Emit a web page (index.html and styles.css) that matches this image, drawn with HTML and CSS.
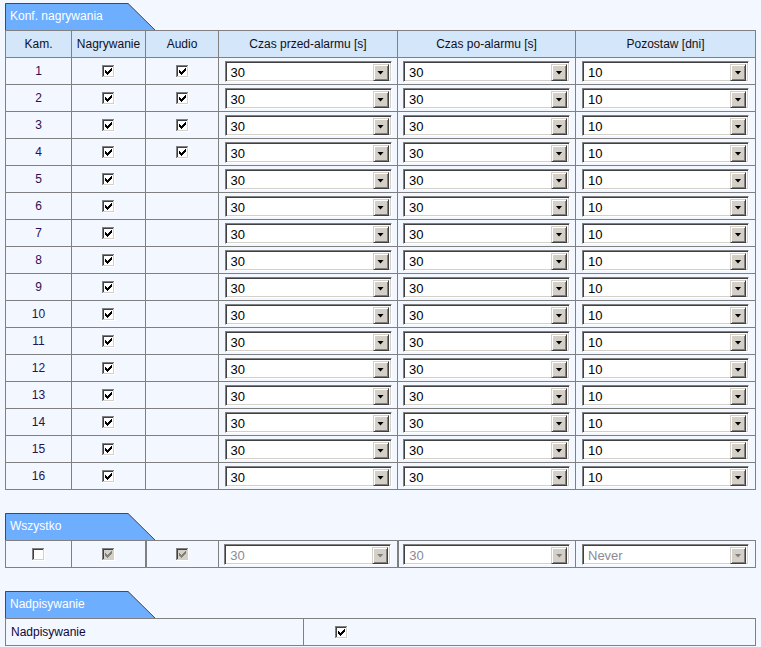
FILE: index.html
```html
<!DOCTYPE html>
<html>
<head>
<meta charset="utf-8">
<link rel="stylesheet" href="styles.css">
</head>
<body>
<svg class="defs" width="0" height="0">
  <defs>
    <symbol id="box" viewBox="0 0 13 13">
      <rect x="0" y="0" width="13" height="13" fill="#ffffff"/>
      <rect x="0" y="0" width="12" height="1" fill="#808080"/>
      <rect x="0" y="0" width="1" height="12" fill="#808080"/>
      <rect x="1" y="1" width="10" height="1" fill="#404040"/>
      <rect x="1" y="1" width="1" height="10" fill="#404040"/>
      <rect x="1" y="11" width="11" height="1" fill="#d4d0c8"/>
      <rect x="11" y="1" width="1" height="11" fill="#d4d0c8"/>
    </symbol>
    <symbol id="tick" viewBox="0 0 13 13">
      <path d="M3 5h1v3h-1z M4 6h1v3h-1z M5 7h1v3h-1z M6 6h1v3h-1z M7 5h1v3h-1z M8 4h1v3h-1z M9 3h1v3h-1z"/>
    </symbol>
    <symbol id="on" viewBox="0 0 13 13">
      <use href="#box"/>
      <use href="#tick" fill="#000"/>
    </symbol>
    <symbol id="off" viewBox="0 0 13 13">
      <use href="#box"/>
    </symbol>
    <symbol id="dis" viewBox="0 0 13 13">
      <use href="#box"/>
      <rect x="2" y="2" width="9" height="9" fill="#d4d0c8"/>
      <use href="#tick" fill="#808080"/>
    </symbol>
  </defs>
</svg>

<div class="page">
  <section class="section">
    <div class="tab">
      <svg class="tab-bg" width="152" height="27" viewBox="0 0 152 27"><polygon points="0,0 123,0 150,27 0,27" fill="#6eaeff"/><polyline points="0.5,27 0.5,0.5 123,0.5 150,27" fill="none" stroke="#4a4a4a" stroke-width="1"/></svg>
      <span class="tab-text">Konf. nagrywania</span>
    </div>
    <table class="grid">
      <colgroup><col class="w1"><col class="w2"><col class="w3"><col class="w4"><col class="w5"><col class="w6"></colgroup>
      <thead>
        <tr><th>Kam.</th><th>Nagrywanie</th><th>Audio</th><th>Czas przed-alarmu [s]</th><th>Czas po-alarmu [s]</th><th>Pozostaw [dni]</th></tr>
      </thead>
      <tbody>
        <tr><td class="num">1</td><td class="c"><svg class="cb"><use href="#on"/></svg></td><td class="c"><svg class="cb"><use href="#on"/></svg></td><td class="c"><div class="sel"><span class="val">30</span><span class="btn"></span></div></td><td class="c"><div class="sel"><span class="val">30</span><span class="btn"></span></div></td><td class="c"><div class="sel"><span class="val">10</span><span class="btn"></span></div></td></tr>
        <tr><td class="num">2</td><td class="c"><svg class="cb"><use href="#on"/></svg></td><td class="c"><svg class="cb"><use href="#on"/></svg></td><td class="c"><div class="sel"><span class="val">30</span><span class="btn"></span></div></td><td class="c"><div class="sel"><span class="val">30</span><span class="btn"></span></div></td><td class="c"><div class="sel"><span class="val">10</span><span class="btn"></span></div></td></tr>
        <tr><td class="num">3</td><td class="c"><svg class="cb"><use href="#on"/></svg></td><td class="c"><svg class="cb"><use href="#on"/></svg></td><td class="c"><div class="sel"><span class="val">30</span><span class="btn"></span></div></td><td class="c"><div class="sel"><span class="val">30</span><span class="btn"></span></div></td><td class="c"><div class="sel"><span class="val">10</span><span class="btn"></span></div></td></tr>
        <tr><td class="num">4</td><td class="c"><svg class="cb"><use href="#on"/></svg></td><td class="c"><svg class="cb"><use href="#on"/></svg></td><td class="c"><div class="sel"><span class="val">30</span><span class="btn"></span></div></td><td class="c"><div class="sel"><span class="val">30</span><span class="btn"></span></div></td><td class="c"><div class="sel"><span class="val">10</span><span class="btn"></span></div></td></tr>
        <tr><td class="num">5</td><td class="c"><svg class="cb"><use href="#on"/></svg></td><td></td><td class="c"><div class="sel"><span class="val">30</span><span class="btn"></span></div></td><td class="c"><div class="sel"><span class="val">30</span><span class="btn"></span></div></td><td class="c"><div class="sel"><span class="val">10</span><span class="btn"></span></div></td></tr>
        <tr><td class="num">6</td><td class="c"><svg class="cb"><use href="#on"/></svg></td><td></td><td class="c"><div class="sel"><span class="val">30</span><span class="btn"></span></div></td><td class="c"><div class="sel"><span class="val">30</span><span class="btn"></span></div></td><td class="c"><div class="sel"><span class="val">10</span><span class="btn"></span></div></td></tr>
        <tr><td class="num">7</td><td class="c"><svg class="cb"><use href="#on"/></svg></td><td></td><td class="c"><div class="sel"><span class="val">30</span><span class="btn"></span></div></td><td class="c"><div class="sel"><span class="val">30</span><span class="btn"></span></div></td><td class="c"><div class="sel"><span class="val">10</span><span class="btn"></span></div></td></tr>
        <tr><td class="num">8</td><td class="c"><svg class="cb"><use href="#on"/></svg></td><td></td><td class="c"><div class="sel"><span class="val">30</span><span class="btn"></span></div></td><td class="c"><div class="sel"><span class="val">30</span><span class="btn"></span></div></td><td class="c"><div class="sel"><span class="val">10</span><span class="btn"></span></div></td></tr>
        <tr><td class="num">9</td><td class="c"><svg class="cb"><use href="#on"/></svg></td><td></td><td class="c"><div class="sel"><span class="val">30</span><span class="btn"></span></div></td><td class="c"><div class="sel"><span class="val">30</span><span class="btn"></span></div></td><td class="c"><div class="sel"><span class="val">10</span><span class="btn"></span></div></td></tr>
        <tr><td class="num">10</td><td class="c"><svg class="cb"><use href="#on"/></svg></td><td></td><td class="c"><div class="sel"><span class="val">30</span><span class="btn"></span></div></td><td class="c"><div class="sel"><span class="val">30</span><span class="btn"></span></div></td><td class="c"><div class="sel"><span class="val">10</span><span class="btn"></span></div></td></tr>
        <tr><td class="num">11</td><td class="c"><svg class="cb"><use href="#on"/></svg></td><td></td><td class="c"><div class="sel"><span class="val">30</span><span class="btn"></span></div></td><td class="c"><div class="sel"><span class="val">30</span><span class="btn"></span></div></td><td class="c"><div class="sel"><span class="val">10</span><span class="btn"></span></div></td></tr>
        <tr><td class="num">12</td><td class="c"><svg class="cb"><use href="#on"/></svg></td><td></td><td class="c"><div class="sel"><span class="val">30</span><span class="btn"></span></div></td><td class="c"><div class="sel"><span class="val">30</span><span class="btn"></span></div></td><td class="c"><div class="sel"><span class="val">10</span><span class="btn"></span></div></td></tr>
        <tr><td class="num">13</td><td class="c"><svg class="cb"><use href="#on"/></svg></td><td></td><td class="c"><div class="sel"><span class="val">30</span><span class="btn"></span></div></td><td class="c"><div class="sel"><span class="val">30</span><span class="btn"></span></div></td><td class="c"><div class="sel"><span class="val">10</span><span class="btn"></span></div></td></tr>
        <tr><td class="num">14</td><td class="c"><svg class="cb"><use href="#on"/></svg></td><td></td><td class="c"><div class="sel"><span class="val">30</span><span class="btn"></span></div></td><td class="c"><div class="sel"><span class="val">30</span><span class="btn"></span></div></td><td class="c"><div class="sel"><span class="val">10</span><span class="btn"></span></div></td></tr>
        <tr><td class="num">15</td><td class="c"><svg class="cb"><use href="#on"/></svg></td><td></td><td class="c"><div class="sel"><span class="val">30</span><span class="btn"></span></div></td><td class="c"><div class="sel"><span class="val">30</span><span class="btn"></span></div></td><td class="c"><div class="sel"><span class="val">10</span><span class="btn"></span></div></td></tr>
        <tr><td class="num">16</td><td class="c"><svg class="cb"><use href="#on"/></svg></td><td></td><td class="c"><div class="sel"><span class="val">30</span><span class="btn"></span></div></td><td class="c"><div class="sel"><span class="val">30</span><span class="btn"></span></div></td><td class="c"><div class="sel"><span class="val">10</span><span class="btn"></span></div></td></tr>
      </tbody>
    </table>
  </section>

  <section class="section">
    <div class="tab">
      <svg class="tab-bg" width="152" height="27" viewBox="0 0 152 27"><polygon points="0,0 123,0 150,27 0,27" fill="#6eaeff"/><polyline points="0.5,27 0.5,0.5 123,0.5 150,27" fill="none" stroke="#4a4a4a" stroke-width="1"/></svg>
      <span class="tab-text">Wszystko</span>
    </div>
    <table class="grid">
      <colgroup><col class="w1"><col class="w2"><col class="w3"><col class="w4"><col class="w5"><col class="w6"></colgroup>
      <tbody>
        <tr><td class="c"><svg class="cb"><use href="#off"/></svg></td><td class="c"><svg class="cb"><use href="#dis"/></svg></td><td class="c thick"><svg class="cb"><use href="#dis"/></svg></td><td class="c"><div class="sel disabled"><span class="val">30</span><span class="btn"></span></div></td><td class="c thick"><div class="sel disabled"><span class="val">30</span><span class="btn"></span></div></td><td class="c"><div class="sel disabled"><span class="val">Never</span><span class="btn"></span></div></td></tr>
      </tbody>
    </table>
  </section>

  <section class="section">
    <div class="tab">
      <svg class="tab-bg" width="152" height="27" viewBox="0 0 152 27"><polygon points="0,0 123,0 150,27 0,27" fill="#6eaeff"/><polyline points="0.5,27 0.5,0.5 123,0.5 150,27" fill="none" stroke="#4a4a4a" stroke-width="1"/></svg>
      <span class="tab-text">Nadpisywanie</span>
    </div>
    <table class="grid">
      <colgroup><col class="wa"><col class="wb"></colgroup>
      <tbody>
        <tr><td class="label">Nadpisywanie</td><td class="ovr"><svg class="cb"><use href="#on"/></svg></td></tr>
      </tbody>
    </table>
  </section>
</div>
</body>
</html>
```

FILE: styles.css
```css
html, body {
  margin: 0;
  padding: 0;
  background: #f3f7ff;
}

body {
  font-family: "Liberation Sans", Arial, sans-serif;
  font-size: 12px;
  color: #000;
}

.defs {
  position: absolute;
  width: 0;
  height: 0;
  overflow: hidden;
}

.page {
  padding: 3px 6px 0 5px;
  width: 750px;
}

.section {
  margin-bottom: 23px;
}

.tab {
  position: relative;
  height: 27px;
  width: 152px;
}

.tab-bg {
  position: absolute;
  left: 0;
  top: 0;
}

.tab-text {
  position: relative;
  display: block;
  padding-left: 5px;
  line-height: 27px;
  color: #ffffff;
  font-size: 12px;
}

.grid {
  border-collapse: collapse;
  table-layout: fixed;
  width: 751px;
  border: 1px solid #808080;
}

.grid th,
.grid td {
  border: 1px solid #808080;
  padding: 0;
  height: 26px;
  line-height: 14px;
}

.grid th {
  background: #d4e6fa;
  font-weight: normal;
  text-align: center;
  color: #101020;
}

.w1 { width: 66px; }
.w2 { width: 74px; }
.w3 { width: 73px; }
.w4 { width: 179px; }
.w5 { width: 178px; }
.w6 { width: 180px; }
.wa { width: 298px; }
.wb { width: 452px; }

.num {
  text-align: center;
  color: #2a1050;
}

.c {
  text-align: center;
}

.c > .sel {
  margin: 0 auto;
}

.thick {
  border-left-width: 2px !important;
}

.cb {
  width: 13px;
  height: 13px;
  display: inline-block;
  vertical-align: middle;
}

.sel {
  display: flex;
  box-sizing: border-box;
  width: 167px;
  height: 21px;
  padding: 2px;
  background: #ffffff;
  border: 1px solid;
  border-color: #808080 #ffffff #ffffff #808080;
  box-shadow: inset 1px 1px 0 #404040, inset -1px -1px 0 #d4d0c8;
  text-align: left;
}

.val {
  flex: 1;
  padding-left: 3px;
  line-height: 17px;
  font-family: "Liberation Sans", Arial, sans-serif;
  font-size: 13px;
  color: #000;
}

.btn {
  box-sizing: border-box;
  width: 16px;
  height: 17px;
  background: #d4d0c8;
  border: 1px solid;
  border-color: #d4d0c8 #404040 #404040 #d4d0c8;
  box-shadow: inset 1px 1px 0 #ffffff, inset -1px -1px 0 #808080;
  display: flex;
  align-items: center;
  justify-content: center;
}

.btn::after {
  content: "";
  display: block;
  width: 7px;
  height: 4px;
  margin-top: 1px;
  background: #000;
  clip-path: polygon(0 0, 7px 0, 3.5px 4px);
}

.disabled .val {
  color: #8a8a98;
}

.disabled .btn::after {
  background: #808080;
}

.label {
  padding-left: 5px !important;
  color: #100838;
}

.ovr {
  padding-left: 31px !important;
}
```
